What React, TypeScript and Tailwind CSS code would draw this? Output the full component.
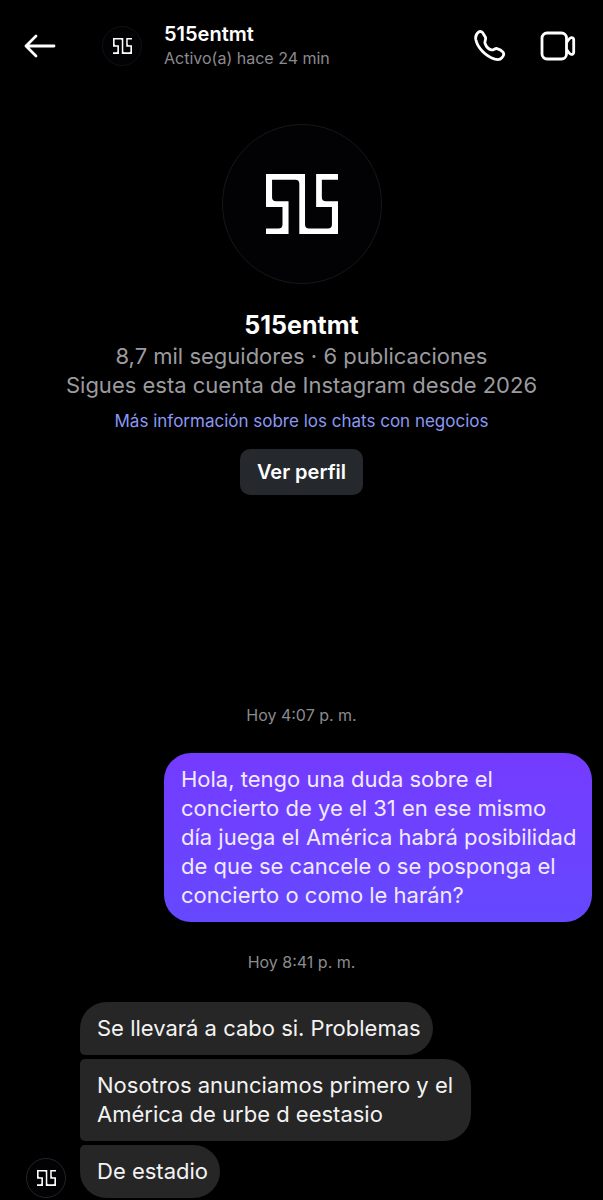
interface Message {
  id: number;
  text: string;
}

const RECEIVED: Message[] = [
  { id: 1, text: "Se llevará a cabo si. Problemas" },
  { id: 2, text: "Nosotros anunciamos primero y el América de urbe d eestasio" },
  { id: 3, text: "De estadio" },
];

function Logo({ className }: { className: string }) {
  return (
    <svg viewBox="165 176 214 180" className={className} fill="currentColor" aria-hidden="true">
      <path d="M165 176H281V326q0 12 12 12H349q12 0 12-12V274H314V176H379V193H331V245q0 12 12 12H379V356H264V205q0-12-12-12H183V245q0 12 12 12H232V356H165V338H202q12 0 12-12V274H165Z" />
    </svg>
  );
}

function Avatar({ className, logo }: { className: string; logo: string }) {
  return (
    <div className={`flex shrink-0 items-center justify-center rounded-full border bg-[#020205] text-white ${className}`}>
      <Logo className={logo} />
    </div>
  );
}

function BackIcon() {
  return (
    <svg width="32" height="24" viewBox="0 0 32 24" fill="none" stroke="currentColor" strokeWidth="2.8" strokeLinecap="round" strokeLinejoin="round">
      <path d="M30 12H2M12 2 2 12l10 10" />
    </svg>
  );
}

function PhoneIcon() {
  return (
    <svg width="32" height="32" viewBox="0 0 32 32" fill="none" stroke="currentColor" strokeWidth="2.8" strokeLinejoin="round">
      <path d="M4.500 2.200C6.200.9 8 1.600 9 3.200L11.400 7.200C12.400 9.200 10.400 11 11 13.200 12 16.200 14.600 19.200 17.500 19.800 19.800 20.300 20.800 18 23 18.600 25.200 19.200 27.800 20.800 29 22.200 30.400 24 29.500 26 28 27.600 26.500 29.600 24 30 21 29.200 12 26.500 3.500 18 1.800 9.500 1.200 6 2.300 3.900 4.500 2.200Z" />
    </svg>
  );
}

function VideoIcon() {
  return (
    <svg width="36" height="30" viewBox="0 0 36 30" fill="none" stroke="currentColor" strokeWidth="2.8" strokeLinejoin="round">
      <rect x="2" y="2" width="24.500" height="26" rx="5" />
      <path d="M26.500 11.500c1.500-1.200 2-3.800 4.300-4.700 1.600-.6 2.900.2 2.900 1.900v12.600c0 1.700-1.300 2.500-2.900 1.900-2.300-.9-2.800-3.500-4.300-4.700" />
    </svg>
  );
}

function Header() {
  return (
    <header className="flex h-[92px] items-center pr-[27px] pl-6">
      <button type="button" aria-label="Atrás">
        <BackIcon />
      </button>
      <Avatar className="ml-[46px] size-10 border-[#111114]" logo="w-[19px]" />
      <div className="ml-[22px] flex-1">
        <h1 className="text-[20px] leading-6 font-semibold">515entmt</h1>
        <p className="text-[16px] leading-6 text-[#8b8b90]">Activo(a) hace 24 min</p>
      </div>
      <div className="flex items-center gap-[34px]">
        <button type="button" aria-label="Llamar">
          <PhoneIcon />
        </button>
        <button type="button" aria-label="Videollamada">
          <VideoIcon />
        </button>
      </div>
    </header>
  );
}

function ProfileCard() {
  return (
    <section className="flex flex-col items-center pt-8 text-center">
      <Avatar className="size-40 border-[#17171a]" logo="w-[72px]" />
      <h2 className="mt-6 text-[25px] leading-[34px] font-bold">515entmt</h2>
      <p className="text-[22px] leading-[29px] text-[#9b9b9f]">
        8,7 mil seguidores · 6 publicaciones
        <br />
        Sigues esta cuenta de Instagram desde 2026
      </p>
      <a href="#info" className="mt-[9px] text-[17px] leading-6 text-[#8b98f5]">
        Más información sobre los chats con negocios
      </a>
      <button type="button" className="mt-4 rounded-[10px] bg-[#25282d] px-[17px] py-[11px] text-[20px] leading-6 font-semibold">
        Ver perfil
      </button>
    </section>
  );
}

function DateLabel({ children }: { children: string }) {
  return <p className="text-center text-[16px] leading-6 text-[#8b8b8e]">{children}</p>;
}

function ReceivedMessages() {
  return (
    <div className="flex items-end pr-6 pl-[26px]">
      <Avatar className="size-10 border-[#242427]" logo="w-[19px]" />
      <ul className="ml-[14px] flex flex-col items-start gap-1">
        {RECEIVED.map((msg, idx) => (
          <li
            key={msg.id}
            className={`max-w-[391px] rounded-r-[27px] bg-[#262626] py-3 pr-3 pl-[17px] text-[22px] leading-[29px] text-[#f3f3f3] ${
              idx === 0 ? "rounded-tl-[27px]" : "rounded-tl-[5px]"
            } ${idx === RECEIVED.length - 1 ? "rounded-bl-[27px]" : "rounded-bl-[5px]"}`}
          >
            {msg.text}
          </li>
        ))}
      </ul>
    </div>
  );
}

export default function App() {
  return (
    <div className="min-h-screen bg-black font-[Inter,'Liberation_Sans',sans-serif] text-white">
      <Header />
      <main>
        <ProfileCard />
        <div className="mt-52">
          <DateLabel>Hoy 4:07 p. m.</DateLabel>
        </div>
        <div className="mt-[26px] flex justify-end pr-[11px]">
          <p className="max-w-[428px] rounded-[27px] bg-linear-to-b from-[#743bff] to-[#6548ff] py-3 pr-3 pl-[17px] text-[22px] leading-[29px] text-[#f1eaff]">
            Hola, tengo una duda sobre el concierto de ye el 31 en ese mismo día juega el América habrá posibilidad de que se cancele o se posponga el concierto o como le harán?
          </p>
        </div>
        <div className="my-7">
          <DateLabel>Hoy 8:41 p. m.</DateLabel>
        </div>
        <ReceivedMessages />
      </main>
    </div>
  );
}
